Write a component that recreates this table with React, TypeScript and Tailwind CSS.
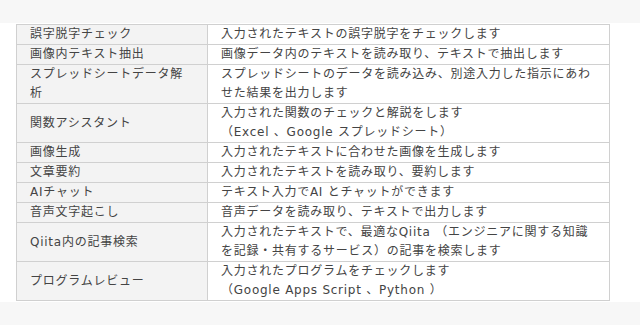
import React from 'react';

const rows: { name: string; desc: React.ReactNode }[] = [
  { name: '誤字脱字チェック', desc: '入力されたテキストの誤字脱字をチェックします' },
  { name: '画像内テキスト抽出', desc: '画像データ内のテキストを読み取り、テキストで抽出します' },
  {
    name: 'スプレッドシートデータ解析',
    desc: 'スプレッドシートのデータを読み込み、別途入力した指示にあわせた結果を出力します',
  },
  {
    name: '関数アシスタント',
    desc: (
      <>
        入力された関数のチェックと解説をします
        <br />
        （Excel 、Google スプレッドシート）
      </>
    ),
  },
  { name: '画像生成', desc: '入力されたテキストに合わせた画像を生成します' },
  { name: '文章要約', desc: '入力されたテキストを読み取り、要約します' },
  { name: 'AIチャット', desc: 'テキスト入力でAI とチャットができます' },
  { name: '音声文字起こし', desc: '音声データを読み取り、テキストで出力します' },
  {
    name: 'Qiita内の記事検索',
    desc: '入力されたテキストで、最適なQiita （エンジニアに関する知識を記録・共有するサービス）の記事を検索します',
  },
  {
    name: 'プログラムレビュー',
    desc: (
      <>
        入力されたプログラムをチェックします
        <br />
        （Google Apps Script 、Python ）
      </>
    ),
  },
];

export default function App() {
  return (
    <div
      className="min-h-screen bg-[#f7f7f7] pt-[23px] text-[#444] text-[12px] leading-[19px] tracking-[0.75px]"
      style={{ fontFamily: '"DejaVu Sans", "Noto Sans CJK JP", sans-serif' }}
    >
      <div className="bg-white py-px pl-4">
        {/* features table */}
        <table className="w-[594px] border-collapse">
          <tbody>
            {rows.map((r) => (
              <tr key={r.name}>
                <td className="w-[191px] border border-[#d0d0d0] bg-[#f3f3f3] px-[13px] align-middle">
                  {r.name}
                </td>
                <td className="border border-[#d0d0d0] bg-white px-[13px] align-middle">{r.desc}</td>
              </tr>
            ))}
          </tbody>
        </table>
      </div>
    </div>
  );
}
